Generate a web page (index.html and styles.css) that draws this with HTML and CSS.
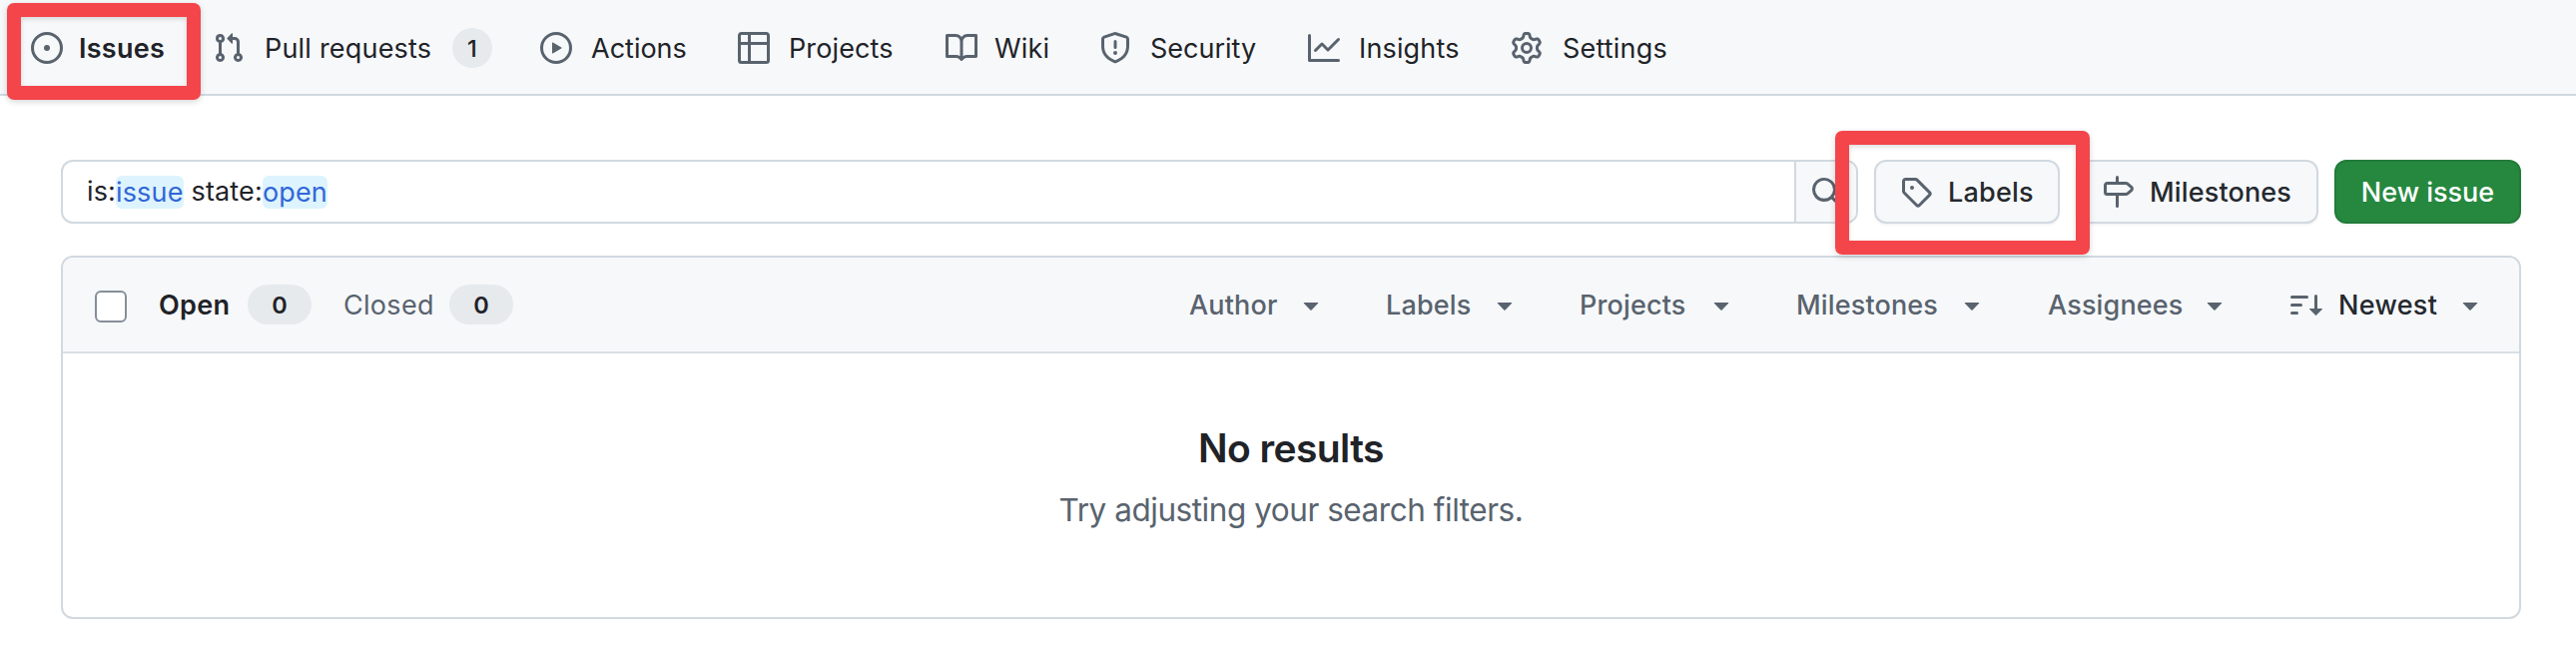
FILE: index.html
```html
<!DOCTYPE html>
<html lang="en">
<head>
<meta charset="utf-8">
<title>Issues</title>
<link rel="stylesheet" href="styles.css">
</head>
<body>
<nav class="nav">
  <a class="tab tab-issues"><svg class="icon" viewBox="0 0 16 16"><path d="M8 9.5a1.5 1.5 0 1 0 0-3 1.5 1.5 0 0 0 0 3Z"/><path d="M8 0a8 8 0 1 1 0 16A8 8 0 0 1 8 0ZM1.5 8a6.5 6.5 0 1 0 13 0 6.5 6.5 0 0 0-13 0Z"/></svg><span class="label">Issues</span></a>
  <a class="tab tab-pulls"><svg class="icon" viewBox="0 0 16 16"><path d="M1.5 3.25a2.25 2.25 0 1 1 3 2.122v5.256a2.251 2.251 0 1 1-1.5 0V5.372A2.25 2.25 0 0 1 1.5 3.25Zm5.677-.177L9.573.677A.25.25 0 0 1 10 .854V2.5h1A2.5 2.5 0 0 1 13.5 5v5.628a2.251 2.251 0 1 1-1.5 0V5a1 1 0 0 0-1-1h-1v1.646a.25.25 0 0 1-.427.177L7.177 3.427a.25.25 0 0 1 0-.354ZM3.75 2.5a.75.75 0 1 0 0 1.5.75.75 0 0 0 0-1.5Zm0 9.5a.75.75 0 1 0 0 1.5.75.75 0 0 0 0-1.5Zm8.25.75a.75.75 0 1 0 1.5 0 .75.75 0 0 0-1.5 0Z"/></svg><span class="label">Pull requests</span><span class="count count-round">1</span></a>
  <a class="tab tab-actions"><svg class="icon" viewBox="0 0 16 16"><path d="M8 0a8 8 0 1 1 0 16A8 8 0 0 1 8 0ZM1.5 8a6.5 6.5 0 1 0 13 0 6.5 6.5 0 0 0-13 0Zm4.879-2.773 4.264 2.559a.25.25 0 0 1 0 .428l-4.264 2.559A.25.25 0 0 1 6 10.559V5.442a.25.25 0 0 1 .379-.215Z"/></svg><span class="label">Actions</span></a>
  <a class="tab tab-projects"><svg class="icon" viewBox="0 0 16 16"><path d="M0 1.75C0 .784.784 0 1.75 0h12.5C15.216 0 16 .784 16 1.75v12.5A1.75 1.75 0 0 1 14.25 16H1.75A1.75 1.75 0 0 1 0 14.25ZM6.5 6.5v8h7.75a.25.25 0 0 0 .25-.25V6.5Zm8-1.5V1.75a.25.25 0 0 0-.25-.25H6.5V5Zm-13 1.5v7.75c0 .138.112.25.25.25H5v-8ZM5 5V1.5H1.75a.25.25 0 0 0-.25.25V5Z"/></svg><span class="label">Projects</span></a>
  <a class="tab tab-wiki"><svg class="icon" viewBox="0 0 16 16"><path d="M0 1.75A.75.75 0 0 1 .75 1h4.253c1.227 0 2.317.59 3 1.501A3.743 3.743 0 0 1 11.006 1h4.245a.75.75 0 0 1 .75.75v10.5a.75.75 0 0 1-.75.75h-4.507a2.25 2.25 0 0 0-1.591.659l-.622.621a.75.75 0 0 1-1.06 0l-.622-.621A2.25 2.25 0 0 0 5.258 13H.75a.75.75 0 0 1-.75-.75Zm7.251 10.324.004-5.073-.002-2.253A2.25 2.25 0 0 0 5.003 2.5H1.5v9h3.757a3.75 3.75 0 0 1 1.994.574ZM8.755 4.75l-.004 7.322a3.752 3.752 0 0 1 1.992-.572H14.5v-9h-3.495a2.25 2.25 0 0 0-2.25 2.25Z"/></svg><span class="label">Wiki</span></a>
  <a class="tab tab-security"><svg class="icon" viewBox="0 0 16 16"><path d="M7.467.133a1.748 1.748 0 0 1 1.066 0l5.25 1.68A1.75 1.75 0 0 1 15 3.48V7c0 1.566-.32 3.182-1.303 4.682-.983 1.498-2.585 2.813-5.032 3.855a1.697 1.697 0 0 1-1.33 0c-2.447-1.042-4.049-2.357-5.032-3.855C1.32 10.182 1 8.566 1 7V3.48a1.75 1.75 0 0 1 1.217-1.667Zm.61 1.429a.25.25 0 0 0-.153 0l-5.25 1.68a.25.25 0 0 0-.174.238V7c0 1.358.275 2.666 1.057 3.86.784 1.194 2.121 2.34 4.366 3.297a.196.196 0 0 0 .154 0c2.245-.956 3.582-2.104 4.366-3.298C13.225 9.666 13.5 8.36 13.5 7V3.48a.251.251 0 0 0-.174-.237l-5.25-1.68ZM8.75 4.75v3a.75.75 0 0 1-1.5 0v-3a.75.75 0 0 1 1.5 0ZM9 10.5a1 1 0 1 1-2 0 1 1 0 0 1 2 0Z"/></svg><span class="label">Security</span></a>
  <a class="tab tab-insights"><svg class="icon" viewBox="0 0 16 16"><path d="M1.5 1.75V13.5h13.75a.75.75 0 0 1 0 1.5H.75a.75.75 0 0 1-.75-.75V1.75a.75.75 0 0 1 1.5 0Zm14.28 2.53-5.25 5.25a.75.75 0 0 1-1.06 0L7 7.06 4.28 9.78a.751.751 0 0 1-1.042-.018.751.751 0 0 1-.018-1.042l3.25-3.25a.75.75 0 0 1 1.06 0L10 7.94l4.72-4.72a.751.751 0 0 1 1.042.018.751.751 0 0 1 .018 1.042Z"/></svg><span class="label">Insights</span></a>
  <a class="tab tab-settings"><svg class="icon" viewBox="0 0 16 16"><path d="M8 0a8.2 8.2 0 0 1 .701.031C9.444.095 9.99.645 10.16 1.29l.288 1.107c.018.066.079.158.212.224.231.114.454.243.668.386.123.082.233.09.299.071l1.103-.303c.644-.176 1.392.021 1.82.63.27.385.506.792.704 1.218.315.675.111 1.422-.364 1.891l-.814.806c-.049.048-.098.147-.088.294.016.257.016.515 0 .772-.01.147.038.246.088.294l.814.806c.475.469.679 1.216.364 1.891a7.977 7.977 0 0 1-.704 1.217c-.428.61-1.176.807-1.82.63l-1.102-.302c-.067-.019-.177-.011-.3.071a5.909 5.909 0 0 1-.668.386c-.133.066-.194.158-.211.224l-.29 1.106c-.168.646-.715 1.196-1.458 1.26a8.006 8.006 0 0 1-1.402 0c-.743-.064-1.289-.614-1.458-1.26l-.289-1.106c-.018-.066-.079-.158-.212-.224a5.738 5.738 0 0 1-.668-.386c-.123-.082-.233-.09-.299-.071l-1.103.303c-.644.176-1.392-.021-1.82-.63a8.12 8.12 0 0 1-.704-1.218c-.315-.675-.111-1.422.363-1.891l.815-.806c.05-.048.098-.147.088-.294a6.214 6.214 0 0 1 0-.772c.01-.147-.038-.246-.088-.294l-.815-.806C.635 6.045.431 5.298.746 4.623a7.92 7.92 0 0 1 .704-1.217c.428-.61 1.176-.807 1.82-.63l1.102.302c.067.019.177.011.3-.071.214-.143.437-.272.668-.386.133-.066.194-.158.211-.224l.29-1.106C6.009.645 6.556.095 7.299.03 7.53.01 7.764 0 8 0Zm-.571 1.525c-.036.003-.108.036-.137.146l-.289 1.105c-.147.561-.549.967-.998 1.189-.173.086-.34.183-.5.29-.417.278-.97.423-1.529.27l-1.103-.303c-.109-.03-.175.016-.195.045-.22.312-.412.644-.573.99-.014.031-.021.11.059.19l.815.806c.411.406.562.957.53 1.456a4.709 4.709 0 0 0 0 .582c.032.499-.119 1.05-.53 1.456l-.815.806c-.081.08-.073.159-.059.19.162.346.353.677.573.989.02.03.085.076.195.046l1.102-.303c.56-.153 1.113-.008 1.53.27.161.107.328.204.501.29.447.222.85.629.997 1.189l.289 1.105c.029.109.101.143.137.146a6.6 6.6 0 0 0 1.142 0c.036-.003.108-.036.137-.146l.289-1.105c.147-.561.549-.967.998-1.189.173-.086.34-.183.5-.29.417-.278.97-.423 1.529-.27l1.103.303c.109.029.175-.016.195-.045.22-.313.411-.644.573-.99.014-.031.021-.11-.059-.19l-.815-.806c-.411-.406-.562-.957-.53-1.456a4.709 4.709 0 0 0 0-.582c-.032-.499.119-1.05.53-1.456l.815-.806c.081-.08.073-.159.059-.19a6.464 6.464 0 0 0-.573-.989c-.02-.03-.085-.076-.195-.046l-1.102.303c-.56.153-1.113.008-1.53-.27a4.44 4.44 0 0 0-.501-.29c-.447-.222-.85-.629-.997-1.189l-.289-1.105c-.029-.11-.101-.143-.137-.146a6.6 6.6 0 0 0-1.142 0ZM11 8a3 3 0 1 1-6 0 3 3 0 0 1 6 0ZM9.5 8a1.5 1.5 0 1 0-3.001.001A1.5 1.5 0 0 0 9.5 8Z"/></svg><span class="label">Settings</span></a>
</nav>
<main class="main">
  <div class="toolbar">
    <div class="search">
      <div class="query"><span>is:</span><span class="token token-issue">issue</span><span class="key">state:</span><span class="token token-open">open</span></div>
      <div class="search-button"><svg class="icon" viewBox="0 0 16 16"><path d="M10.68 11.74a6 6 0 0 1-7.922-8.982 6 6 0 0 1 8.982 7.922l3.04 3.04a.749.749 0 0 1-.326 1.275.749.749 0 0 1-.734-.215ZM11.5 7a4.499 4.499 0 1 0-8.997 0A4.499 4.499 0 0 0 11.5 7Z"/></svg></div>
    </div>
    <div class="button button-labels"><svg class="icon" viewBox="0 0 16 16"><path d="M1 7.775V2.75C1 1.784 1.784 1 2.75 1h5.025c.464 0 .91.184 1.238.513l6.25 6.25a1.75 1.75 0 0 1 0 2.474l-5.026 5.026a1.75 1.75 0 0 1-2.474 0l-6.25-6.25A1.752 1.752 0 0 1 1 7.775Zm1.5 0c0 .066.026.13.073.177l6.25 6.25a.25.25 0 0 0 .354 0l5.025-5.025a.25.25 0 0 0 0-.354l-6.25-6.25a.25.25 0 0 0-.177-.073H2.75a.25.25 0 0 0-.25.25ZM6 5a1 1 0 1 1 0 2 1 1 0 0 1 0-2Z"/></svg><span class="label">Labels</span></div>
    <div class="button button-milestones"><svg class="icon" viewBox="0 0 16 16"><path d="M7.75 0a.75.75 0 0 1 .75.75V3h3.634c.414 0 .814.147 1.13.414l2.07 1.75a1.75 1.75 0 0 1 0 2.672l-2.07 1.75a1.75 1.75 0 0 1-1.13.414H8.5v5.25a.75.75 0 0 1-1.5 0V10H2.75A1.75 1.75 0 0 1 1 8.25v-3.5C1 3.784 1.784 3 2.75 3H7V.75A.75.75 0 0 1 7.75 0Zm4.384 8.5a.25.25 0 0 0 .161-.06l2.07-1.75a.248.248 0 0 0 0-.38l-2.07-1.75a.25.25 0 0 0-.161-.06H2.75a.25.25 0 0 0-.25.25v3.5c0 .138.112.25.25.25h9.384Z"/></svg><span class="label">Milestones</span></div>
    <div class="button button-primary"><span class="label">New issue</span></div>
  </div>
  <section class="list">
    <header class="list-header">
      <span class="checkbox"></span>
      <span class="state state-open">Open</span><span class="count">0</span>
      <span class="state state-closed">Closed</span><span class="count">0</span>
      <div class="filters">
        <div class="filter filter-author"><span class="label">Author</span><svg class="icon" viewBox="0 0 16 16"><path d="m4.427 7.427 3.396 3.396a.25.25 0 0 0 .354 0l3.396-3.396A.25.25 0 0 0 11.396 7H4.604a.25.25 0 0 0-.177.427Z"/></svg></div>
        <div class="filter filter-labels"><span class="label">Labels</span><svg class="icon" viewBox="0 0 16 16"><path d="m4.427 7.427 3.396 3.396a.25.25 0 0 0 .354 0l3.396-3.396A.25.25 0 0 0 11.396 7H4.604a.25.25 0 0 0-.177.427Z"/></svg></div>
        <div class="filter filter-projects"><span class="label">Projects</span><svg class="icon" viewBox="0 0 16 16"><path d="m4.427 7.427 3.396 3.396a.25.25 0 0 0 .354 0l3.396-3.396A.25.25 0 0 0 11.396 7H4.604a.25.25 0 0 0-.177.427Z"/></svg></div>
        <div class="filter filter-milestones"><span class="label">Milestones</span><svg class="icon" viewBox="0 0 16 16"><path d="m4.427 7.427 3.396 3.396a.25.25 0 0 0 .354 0l3.396-3.396A.25.25 0 0 0 11.396 7H4.604a.25.25 0 0 0-.177.427Z"/></svg></div>
        <div class="filter filter-assignees"><span class="label">Assignees</span><svg class="icon" viewBox="0 0 16 16"><path d="m4.427 7.427 3.396 3.396a.25.25 0 0 0 .354 0l3.396-3.396A.25.25 0 0 0 11.396 7H4.604a.25.25 0 0 0-.177.427Z"/></svg></div>
        <div class="filter filter-sort"><svg class="icon" viewBox="0 0 16 16"><path d="M0 4.25a.75.75 0 0 1 .75-.75h7.5a.75.75 0 0 1 0 1.5H.75A.75.75 0 0 1 0 4.25Zm0 4a.75.75 0 0 1 .75-.75h4.5a.75.75 0 0 1 0 1.5H.75A.75.75 0 0 1 0 8.25Zm0 4a.75.75 0 0 1 .75-.75h2.5a.75.75 0 0 1 0 1.5H.75a.75.75 0 0 1-.75-.75ZM13.5 10h2.25a.25.25 0 0 1 .177.427l-3 3a.25.25 0 0 1-.354 0l-3-3A.25.25 0 0 1 9.75 10H12V3.75a.75.75 0 0 1 1.5 0V10Z"/></svg><span class="label">Newest</span><svg class="icon" viewBox="0 0 16 16"><path d="m4.427 7.427 3.396 3.396a.25.25 0 0 0 .354 0l3.396-3.396A.25.25 0 0 0 11.396 7H4.604a.25.25 0 0 0-.177.427Z"/></svg></div>
      </div>
    </header>
    <div class="empty">
      <h2 class="empty-title">No results</h2>
      <p class="empty-text">Try adjusting your search filters.</p>
    </div>
  </section>
</main>
<div class="highlight highlight-issues"></div>
<div class="highlight highlight-labels"></div>
</body>
</html>
```
FILE: styles.css
```css
* { box-sizing: border-box; }
body {
  margin: 0;
  height: 656px;
  overflow: hidden;
  position: relative;
  background: #fff;
  color: #1f2328;
  font: 27px/40px Inter, "Liberation Sans", sans-serif;
  white-space: nowrap;
}
.icon { width: 32px; height: 32px; flex: none; display: block; fill: #59636e; }
.label { flex: none; display: block; padding-top: 1px; }

.nav {
  height: 96px;
  padding-left: 31px;
  display: flex;
  align-items: center;
  background: #f6f8fa;
  border-bottom: 2px solid #d1d9e0;
}
.tab { display: flex; align-items: center; flex: none; gap: 19px; padding-top: 2px; }
.tab-issues { width: 182px; font-weight: 600; gap: 16px; letter-spacing: .25px; }
.tab-pulls { width: 328px; gap: 20px; }
.tab-actions { width: 198px; }
.tab-projects { width: 208px; letter-spacing: .12px; }
.tab-wiki { width: 154px; gap: 17px; letter-spacing: .2px; }
.tab-security { width: 209px; }
.tab-insights { width: 203px; letter-spacing: .15px; }
.tab-settings { width: 160px; gap: 20px; letter-spacing: .2px; }
.tab-pulls .label { width: 168px; letter-spacing: .2px; }

.count {
  width: 64px;
  height: 40px;
  flex: none;
  border-radius: 20px;
  background: #e6eaed;
  color: #1f2328;
  text-align: center;
  font-size: 23.5px;
  font-weight: 600;
  line-height: 41px;
}
.count-round { width: 40px; font-weight: 500; }

.main { padding: 64px 55px 0 61px; }
.toolbar { display: flex; gap: 16px; height: 64px; }
.search {
  width: 1800px;
  display: flex;
  border: 2px solid #d1d9e0;
  border-radius: 12px;
  overflow: hidden;
}
.query { flex: 1; display: flex; align-items: center; padding-left: 24px; letter-spacing: .15px; }
.token { color: #3366d6; background: #ddf4ff; border-radius: 6px; height: 33px; line-height: 33px; }
.key { margin-left: 8px; }
.search-button {
  width: 62px;
  padding-left: 14px;
  display: flex;
  align-items: center;
  background: #f6f8fa;
  border-left: 2px solid #d1d9e0;
}
.button {
  display: flex;
  align-items: center;
  border: 2px solid #d1d9e0;
  border-radius: 12px;
  background: #f6f8fa;
  color: #25292e;
  font-weight: 500;
  padding-left: 24px;
  gap: 16px;
  box-shadow: 0 2px 2px rgba(31, 35, 40, .04);
}
.button-labels { width: 186px; letter-spacing: .2px; }
.button-milestones { width: 243px; letter-spacing: .15px; }
.button-primary {
  width: 187px;
  padding: 0;
  justify-content: center;
  background: #26883f;
  border-color: #237b3a;
  color: #fff;
}

.list {
  margin-top: 32px;
  height: 364px;
  border: 2px solid #d1d9e0;
  border-radius: 12px;
  overflow: hidden;
}
.list-header {
  height: 96px;
  display: flex;
  align-items: center;
  padding: 0;
  background: #f6f8fa;
  border-bottom: 2px solid #d9e0e7;
  padding-left: 32px;
}
.checkbox {
  width: 32px;
  height: 32px;
  flex: none;
  margin-top: 4px;
  border: 2px solid #858f99;
  border-radius: 6px;
  background: #fff;
}
.state { padding-top: 1px; letter-spacing: .3px; }
.state-open { width: 89px; margin-left: 32px; font-weight: 600; }
.state-closed { width: 106px; margin-left: 32px; color: #59636e; }
.filters { margin-left: 677px; display: flex; }
.filter { display: flex; align-items: center; justify-content: space-between; flex: none; color: #59636e; font-weight: 500; letter-spacing: .15px; }
.filter-author { width: 138px; margin-right: 59px; }
.filter-labels { width: 135px; margin-right: 59px; }
.filter-projects { width: 158px; margin-right: 59px; }
.filter-milestones { width: 192px; margin-right: 60px; }
.filter-assignees { width: 183px; margin-right: 60px; }
.filter-sort { width: 195px; justify-content: flex-start; gap: 16px; color: #25292e; letter-spacing: .3px; }
.filter-sort .label { width: 100px; }

.empty { text-align: center; padding-top: 65px; }
.empty-title { margin: 0; font-size: 39px; line-height: 60px; font-weight: 600; letter-spacing: -.6px; }
.empty-text { margin: 2px 0 0; font-size: 31.5px; line-height: 60px; color: #59636e; letter-spacing: -.46px; }

.highlight {
  position: absolute;
  border: 14px solid #f4454a;
  border-radius: 7px;
  box-shadow: 0 2px 6px rgba(0, 0, 0, .16), inset 0 2px 5px rgba(0, 0, 0, .14);
}
.highlight-issues { left: 7px; top: 3px; width: 194px; height: 97px; }
.highlight-labels { left: 1838px; top: 131px; width: 255px; height: 124px; }
```
